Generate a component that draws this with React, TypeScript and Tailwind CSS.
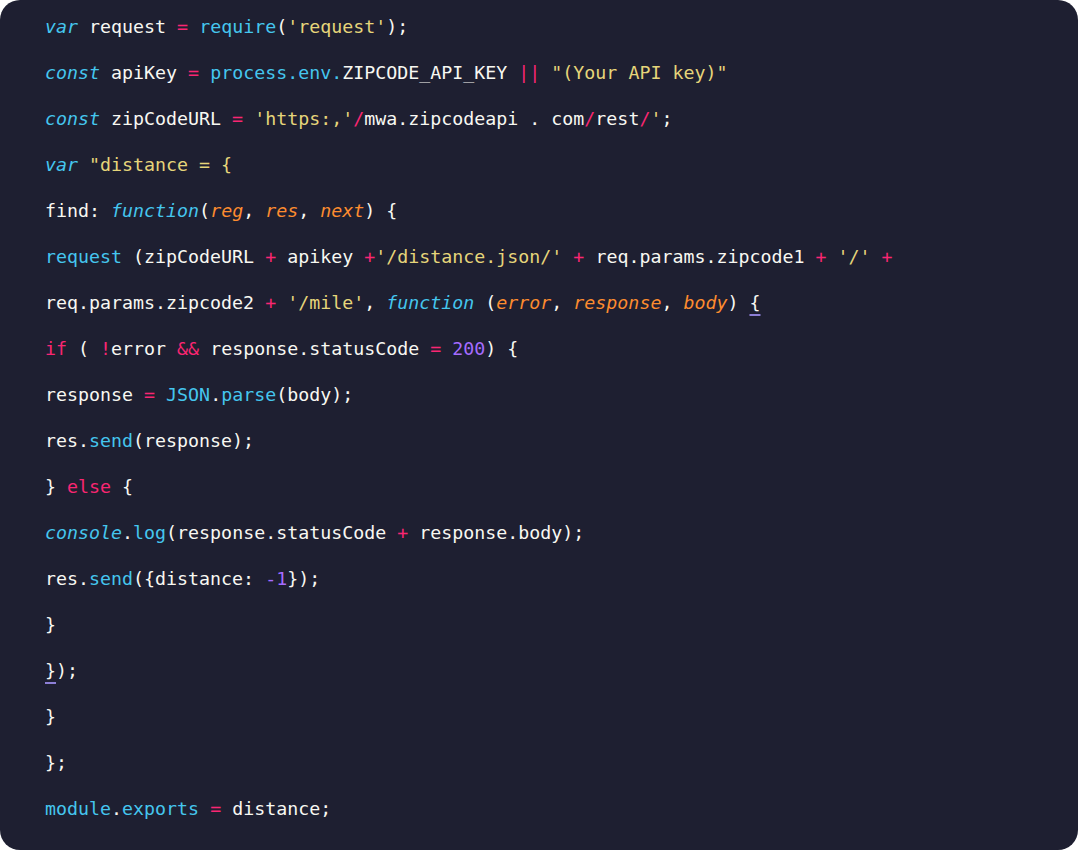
import React from "react";

type Tok = [string, string];

const W = "text-[#f8f8f2]";
const C = "text-[#45c6ee]";
const CI = "text-[#45c6ee] italic";
const P = "text-[#f92672]";
const Y = "text-[#e6d57a]";
const O = "text-[#fd8c2f] italic";
const N = "text-[#a56cff]";
const U = "text-[#f8f8f2] underline decoration-[#8d7fd6] decoration-2 underline-offset-[5px]";

const lines: Tok[][] = [
  [[CI, "var"], [W, " request "], [P, "="], [W, " "], [C, "require"], [W, "("], [Y, "'request'"], [W, ");"]],
  [[CI, "const"], [W, " apiKey "], [P, "="], [W, " "], [C, "process.env."], [W, "ZIPCODE_API_KEY "], [P, "||"], [W, " "], [Y, "\"(Your API key)\""]],
  [[CI, "const"], [W, " zipCodeURL "], [P, "="], [W, " "], [Y, "'https:,'"], [P, "/"], [W, "mwa.zipcodeapi . com"], [P, "/"], [W, "rest"], [P, "/"], [Y, "'"], [W, ";"]],
  [[CI, "var"], [W, " "], [Y, "\"distance = {"]],
  [[W, "find: "], [CI, "function"], [W, "("], [O, "reg"], [W, ", "], [O, "res"], [W, ", "], [O, "next"], [W, ") {"]],
  [[C, "request"], [W, " (zipCodeURL "], [P, "+"], [W, " apikey "], [P, "+"], [Y, "'/distance.json/'"], [W, " "], [P, "+"], [W, " req.params.zipcode1 "], [P, "+"], [W, " "], [Y, "'/'"], [W, " "], [P, "+"]],
  [[W, "req.params.zipcode2 "], [P, "+"], [W, " "], [Y, "'/mile'"], [W, ", "], [CI, "function"], [W, " ("], [O, "error"], [W, ", "], [O, "response"], [W, ", "], [O, "body"], [W, ") "], [U, "{"]],
  [[P, "if"], [W, " ( "], [P, "!"], [W, "error "], [P, "&&"], [W, " response.statusCode "], [P, "="], [W, " "], [N, "200"], [W, ") {"]],
  [[W, "response "], [P, "="], [W, " "], [C, "JSON"], [W, "."], [C, "parse"], [W, "(body);"]],
  [[W, "res."], [C, "send"], [W, "(response);"]],
  [[W, "} "], [P, "else"], [W, " {"]],
  [[CI, "console"], [W, "."], [C, "log"], [W, "(response.statusCode "], [P, "+"], [W, " response.body);"]],
  [[W, "res."], [C, "send"], [W, "({distance: "], [N, "-1"], [W, "});"]],
  [[W, "}"]],
  [[U, "}"], [W, ");"]],
  [[W, "}"]],
  [[W, "};"]],
  [[C, "module"], [W, "."], [C, "exports"], [W, " "], [P, "="], [W, " distance;"]],
];

export default function App() {
  return (
    <div className="w-[1078px] h-[850px] bg-white">
      <div
        className="w-full h-full bg-[#1e1f31] rounded-[20px] pl-[45px] pt-[4px] flex flex-col text-[18.3px]"
        style={{ fontFamily: '"DejaVu Sans Mono", "Liberation Mono", monospace' }}
      >
        {lines.map((toks, i) => (
          <div key={i} className="h-[46px] flex items-center whitespace-pre">
            {toks.map(([cls, t], j) => (
              <span key={j} className={cls}>
                {t}
              </span>
            ))}
          </div>
        ))}
      </div>
    </div>
  );
}
